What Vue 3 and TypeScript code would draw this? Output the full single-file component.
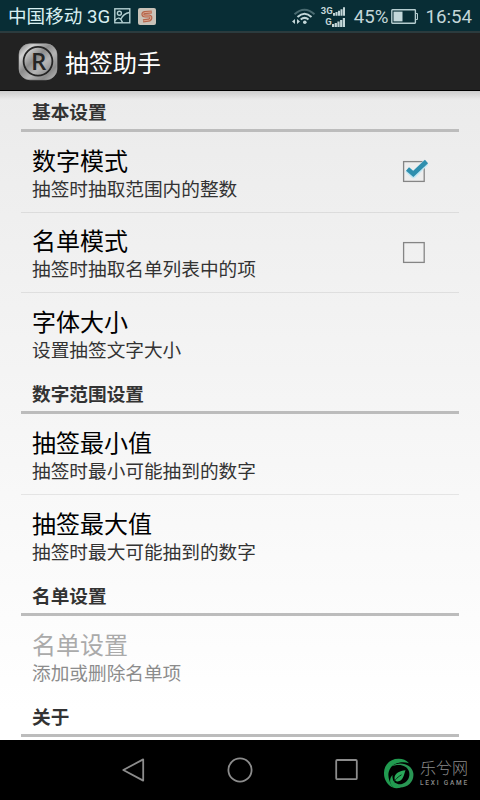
<script setup lang="ts">
interface Item {
  title: string
  summary: string
  checked?: boolean
  disabled?: boolean
}
interface Section {
  name: string
  items: Item[]
}

const sections: Section[] = [
  {
    name: '基本设置',
    items: [
      { title: '数字模式', summary: '抽签时抽取范围内的整数', checked: true },
      { title: '名单模式', summary: '抽签时抽取名单列表中的项', checked: false },
      { title: '字体大小', summary: '设置抽签文字大小' },
    ],
  },
  {
    name: '数字范围设置',
    items: [
      { title: '抽签最小值', summary: '抽签时最小可能抽到的数字' },
      { title: '抽签最大值', summary: '抽签时最大可能抽到的数字' },
    ],
  },
  {
    name: '名单设置',
    items: [{ title: '名单设置', summary: '添加或删除名单项', disabled: true }],
  },
  { name: '关于', items: [] },
]
</script>

<template>
  <div class="screen">
    <header class="status">
      <span class="carrier">中国移动 3G</span>
      <svg class="pic" width="17" height="16" viewBox="0 0 17 16">
        <g fill="none" stroke="#b4d0d2" stroke-width="1.4">
          <rect x="0.8" y="0.8" width="15" height="14" />
          <circle cx="5.4" cy="5.2" r="2" />
          <path d="M1 12.5 C3.5 9 6.5 9 8.5 14.5 M7 11 C9 6.5 12 5 15.5 4.5" />
        </g>
      </svg>
      <svg class="sogou" width="18" height="17" viewBox="0 0 18 17">
        <rect width="18" height="17" rx="2" fill="#c9c2b8" />
        <path d="M13.8 4 L6.5 4.6 Q4.6 5 5 6.8 Q5.3 8 7 8 L11.2 8 Q13 8.2 12.8 10 Q12.5 12 10.5 12.2 L5 12.8" fill="none" stroke="#b5654b" stroke-width="3.2" />
        <path d="M13.4 4 L6.5 4.6 Q4.6 5 5 6.8 Q5.3 8 7 8 L11.2 8 Q13 8.2 12.8 10 Q12.5 12 10.5 12.2 L5.4 12.8" fill="none" stroke="#dcab94" stroke-width="0.9" />
      </svg>
      <span class="spacer"></span>
      <svg class="wifi" width="24" height="17" viewBox="0 0 24 17">
        <g fill="none" stroke-width="2">
          <path d="M2.5 6.3 Q12.5 -2.8 22.5 6.3" stroke="#496a70" />
          <path d="M5.5 9 Q12.5 2.6 19.5 9" stroke="#c3d6d8" />
          <path d="M8.7 11.5 Q12.7 8.2 16.5 11.5" stroke="#c3d6d8" />
        </g>
        <circle cx="12.8" cy="14.2" r="1.8" fill="#c3d6d8" />
        <path d="M0 13.5 L3 11 V16 Z M8 13.5 L5 11 V16 Z" fill="#c3d6d8" />
      </svg>
      <div class="signals">
        <div v-for="label in ['3G', 'G']" :key="label" class="signal">
          <span>{{ label }}</span>
          <svg width="13" height="9" viewBox="0 0 13 9">
            <path d="M0 6h2.2v3h-2.2z M2.7 5h2.2v4h-2.2z M5.4 3.6h2.2v5.4h-2.2z M8.1 2h2.2v7h-2.2z M10.8 0h2.2v9h-2.2z" fill="#c3d6d8" />
          </svg>
        </div>
      </div>
      <span class="percent">45%</span>
      <svg class="battery" width="27" height="15" viewBox="0 0 27 15">
        <rect x="0.8" y="0.8" width="23.6" height="13.4" rx="0.6" fill="none" stroke="#b5cdd0" stroke-width="1.4" />
        <rect x="2.5" y="2.6" width="9" height="9.8" fill="#c4d8db" />
        <path d="M25 4.5 h1.5 v6 H25" fill="none" stroke="#b5cdd0" />
      </svg>
      <span class="clock">16:54</span>
    </header>

    <div class="appbar">
      <svg class="logo" width="40" height="38" viewBox="0 0 40 38">
        <defs>
          <linearGradient id="metal" x1="0" y1="0" x2="1" y2="1">
            <stop offset="0" stop-color="#777" />
            <stop offset="0.2" stop-color="#d2d2d2" />
            <stop offset="0.42" stop-color="#8c8c8c" />
            <stop offset="0.6" stop-color="#b5b5b5" />
            <stop offset="0.8" stop-color="#8b8b8b" />
            <stop offset="1" stop-color="#c0c0c0" />
          </linearGradient>
        </defs>
        <rect x="1" y="0.8" width="38" height="36" rx="11" fill="url(#metal)" stroke="#aaa" stroke-width="0.6" />
        <circle cx="20" cy="18.3" r="14.4" fill="none" stroke="#252525" stroke-width="1.8" />
        <text x="20.6" y="26.6" text-anchor="middle" class="logo-letter">R</text>
      </svg>
      <h1>抽签助手</h1>
    </div>

    <main class="prefs">
      <section v-for="s in sections" :key="s.name">
        <h2>{{ s.name }}</h2>
        <div v-for="item in s.items" :key="item.title" class="item" :class="{ disabled: item.disabled }">
          <div class="texts">
            <div class="title">{{ item.title }}</div>
            <div class="summary">{{ item.summary }}</div>
          </div>
          <svg v-if="item.checked !== undefined" class="check" width="28" height="26" viewBox="0 0 28 26">
            <rect x="1.6" y="4.6" width="20.6" height="19.8" fill="none" stroke="#858585" stroke-width="1.3" />
            <template v-if="item.checked">
              <path d="M5.5 12.5 L11.3 18 L24 5.5" fill="none" stroke="#c3e7f3" stroke-width="6.5" stroke-linejoin="round" />
              <path d="M5.5 12 L11.3 17 L24.5 4.5" fill="none" stroke="#2f8fae" stroke-width="4.6" />
            </template>
          </svg>
        </div>
      </section>
    </main>

    <nav class="navbar">
      <svg class="keys" width="240" height="28" viewBox="0 0 240 28">
        <g fill="none" stroke="#8c8c8c" stroke-width="1.8" stroke-linejoin="round">
          <path d="M3.3 14 L23.2 3.4 V24.6 Z" />
          <circle cx="120" cy="14" r="11.6" />
          <rect x="216.2" y="4" width="20.6" height="19.2" rx="1" />
        </g>
      </svg>
      <div class="brand">
        <svg width="32" height="31" viewBox="0 0 32 31">
          <path d="M16 0.8 C7 0.5 0.8 7 1 15.5 C1 22 5 27.5 10 29.6 C5.5 23 3.5 16 7.5 10 C11 4.8 19 3.2 26 5.2 C23.5 2.2 19.5 0.9 16 0.8Z" fill="#219b50" />
          <path d="M7.5 9 C16 2.5 28.5 5.5 30.3 15 C31.5 23 25 29.8 16.5 29.5 C11 29 8 25 9 20 C10.5 25 14.5 27 19 26 C24.5 24.5 27.5 19 26 13.5 C24 7 15.5 5.2 7.5 9Z" fill="#299654" />
          <path d="M22.5 12.3 C16.5 12.7 12 15.5 11.5 19.5 C11.3 22.5 13 24 15.5 23.3 C20.5 22.2 20.8 17 22.5 12.3Z" fill="#2aa95a" />
          <path d="M10 27.5 C10.5 23 13.5 19.8 18.5 16.8" fill="none" stroke="#092f18" stroke-width="1" />
          <path d="M10 29.6 C6 25 6.5 20 9.5 17 C9 23 12 27.5 18 29.5 C15 30.4 12 30.4 10 29.6Z" fill="#219b50" />
        </svg>
        <div class="brand-text">
          <span class="brand-cn">乐兮网</span>
          <span class="brand-en">LEXI GAME</span>
        </div>
      </div>
    </nav>
  </div>
</template>

<style>
body {
  margin: 0;
}
</style>

<style scoped>
.screen {
  width: 480px;
  height: 800px;
  display: flex;
  flex-direction: column;
  overflow: hidden;
  background: #000;
  font-family: Roboto, 'Noto Sans CJK SC', sans-serif;
}
.status {
  box-sizing: border-box;
  height: 33px;
  flex: none;
  display: flex;
  align-items: center;
  padding: 1px 8px 0 8px;
  background: #082d35;
  border-bottom: 2px solid #2b3b3e;
  color: #c3d6d8;
  white-space: nowrap;
}
.carrier {
  padding-top: 2px;
  font-size: 18.6px;
  line-height: 28px;
  color: #d8f0f2;
}
.pic {
  margin-left: 4px;
}
.sogou {
  margin-left: 7px;
}
.spacer {
  flex: 1;
}
.wifi {
  margin-right: 5px;
}
.signals {
  width: 24px;
  display: flex;
  flex-direction: column;
  gap: 1px;
}
.signal {
  height: 10px;
  display: flex;
  justify-content: flex-end;
  align-items: flex-end;
  font-size: 9.5px;
  line-height: 11px;
  font-weight: 700;
}
.percent {
  padding-top: 2px;
  margin-left: 9px;
  font-size: 18.7px;
}
.battery {
  margin: 0 7px 0 3px;
}
.clock {
  padding-top: 2px;
  font-size: 18.7px;
}
.appbar {
  box-sizing: border-box;
  height: 58px;
  flex: none;
  display: flex;
  align-items: center;
  padding-left: 18px;
  background: #222;
  border-bottom: 1px solid #000;
}
.logo-letter {
  font-family: 'Open Sans', sans-serif;
  font-size: 24px;
  font-weight: 600;
  fill: #252525;
}
h1 {
  margin: 0 0 0 7px;
  padding-top: 4px;
  font-size: 24px;
  line-height: 34px;
  font-weight: 400;
  color: #fff;
}
.prefs {
  box-sizing: border-box;
  height: 649px;
  flex: none;
  padding: 0 21px;
  overflow: hidden;
  background:
    linear-gradient(rgba(0, 0, 0, 0.13), rgba(0, 0, 0, 0) 9px),
    linear-gradient(#ebebeb, #fff 620px);
}
h2 {
  box-sizing: border-box;
  height: 41px;
  margin: 0;
  padding: 2px 11px 0;
  border-bottom: 3px solid #bcbcbc;
  font-size: 18.67px;
  line-height: 40px;
  font-weight: 700;
  color: #333;
}
.item {
  box-sizing: border-box;
  height: 80px;
  display: flex;
  align-items: center;
  justify-content: space-between;
  padding: 0 29px 0 11px;
}
.item:nth-of-type(1):not(:last-child) {
  height: 81px;
}
.item:not(:last-child) {
  border-bottom: 1px solid rgba(0, 0, 0, 0.08);
}
.texts {
  padding-top: 6px;
}
.check {
  margin-bottom: 4px;
}
.title {
  height: 28px;
  font-size: 24px;
  line-height: 28px;
  color: #000;
}
.summary {
  height: 27px;
  font-size: 18.67px;
  line-height: 28px;
  color: #333;
}
.disabled .title {
  color: #aaa;
}
.disabled .summary {
  color: #8c8c8c;
}
.navbar {
  height: 60px;
  flex: none;
  display: flex;
  align-items: center;
  padding-left: 120px;
}
.brand {
  display: flex;
  align-items: center;
  margin: 7px 0 0 23px;
}
.brand-text {
  display: flex;
  flex-direction: column;
  margin-left: 5px;
  color: #8b8b8b;
}
.brand-cn {
  font-size: 16px;
  line-height: 17px;
  font-weight: 300;
}
.brand-en {
  margin-top: 2px;
  font-size: 6.5px;
  line-height: 8px;
  font-weight: 500;
  letter-spacing: 1.8px;
  white-space: nowrap;
}
</style>
